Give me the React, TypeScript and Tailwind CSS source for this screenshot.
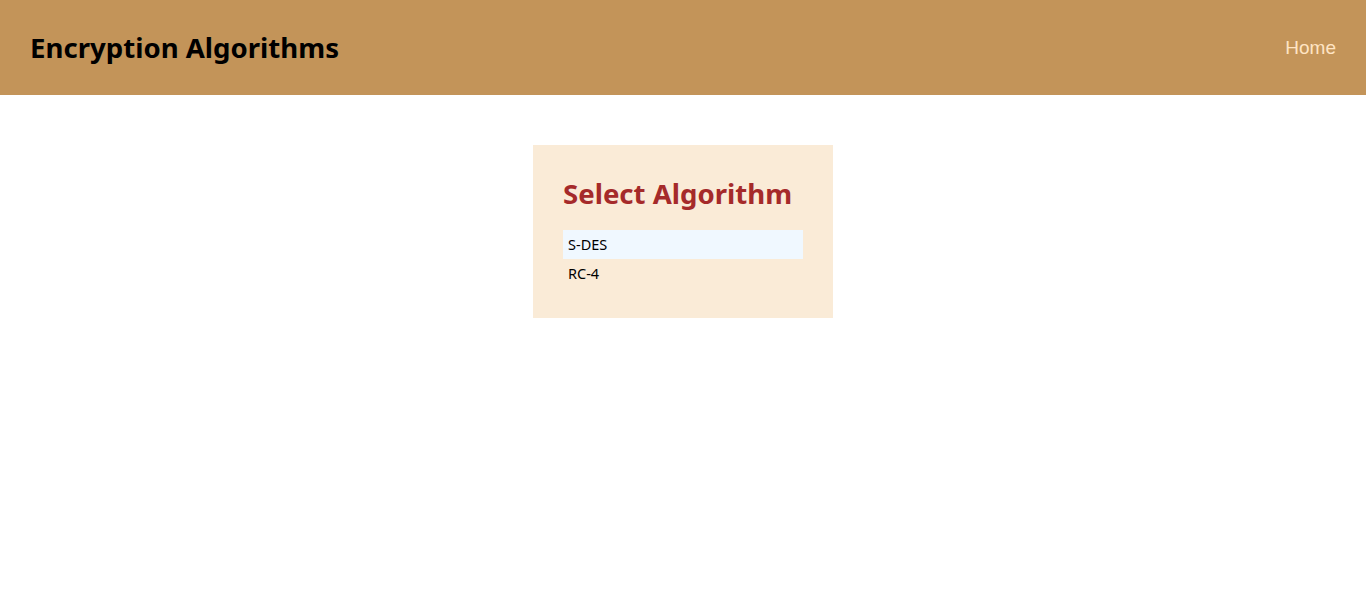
const algorithms = ["S-DES", "RC-4"];

export default function App() {
  return (
    <div className="min-h-screen bg-white font-['Noto_Sans',sans-serif]">
      <header className="flex h-[95px] items-center justify-between bg-[#c39459] px-[30px]">
        <h1 className="text-[27.6px] font-bold text-black">Encryption Algorithms</h1>
        <a href="#" className="pt-[2px] font-['Liberation_Sans',sans-serif] text-[19px] text-[#ffe4c4]">
          Home
        </a>
      </header>

      <div className="flex justify-center pt-[50px]">
        <div className="w-[300px] bg-[#faebd7] px-[30px] pt-[28px] pb-[30px]">
          <h2 className="mb-[17px] text-[27.6px] leading-[40px] font-bold text-[#a52a2a]">
            Select Algorithm
          </h2>
          <ul className="w-[240px]">
            {algorithms.map((name, i) => (
              <li
                key={name}
                className={`h-[29px] px-[5px] text-[14.5px] leading-[29px] text-black ${
                  i === 0 ? "bg-[#f0f8ff]" : ""
                }`}
              >
                {name}
              </li>
            ))}
          </ul>
        </div>
      </div>
    </div>
  );
}
